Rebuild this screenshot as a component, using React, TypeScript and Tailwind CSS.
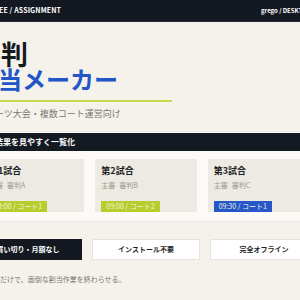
import React from "react";

const F = { fontFamily: '"Noto Sans CJK JP", "Noto Sans", sans-serif' };

function Card({ title, sub, time, color }: { title: string; sub: string; time: string; color: string }) {
  return (
    <div className="flex-1 bg-[#edeae3] h-[53px] px-[6px] pt-[6px]">
      <div className="text-[9px] leading-[12px] font-bold text-[#1c1f24]">{title}</div>
      <div className="flex gap-[4px] text-[7px] leading-[10px] text-[#9b988f] mt-[3px]">
        <span>主審</span>
        <span>{sub}</span>
      </div>
      <div className={`inline-block mt-[4px] h-[11px] px-[5px] text-[7px] leading-[11px] text-[#f3f6dc] ${color}`}>{time}</div>
    </div>
  );
}

export default function App() {
  return (
    <div className="w-[300px] h-[300px] overflow-hidden bg-[#f5f2eb]" style={F}>
      <div className="h-[22px] bg-[#131821] border-b border-[#2a303a]">
        <div className="-ml-[26px] w-[344px] h-full flex items-center pl-[2px]">
          <div className="text-[7px] font-bold text-white tracking-[0.02em] whitespace-nowrap">REFEREE / ASSIGNMENT</div>
          <div className="flex-1"></div>
          <div className="w-[57px] shrink-0 text-[6px] font-bold text-white whitespace-nowrap">grego / DESKTOP</div>
        </div>
      </div>
      <div className="-ml-[26px] w-[344px]">
        <div className="pt-[18px]">
          <div className="text-[27px] leading-[27px] font-bold text-[#16191e]">審判</div>
          <div className="text-[24px] leading-[24px] font-bold text-[#2256c6]">割当メーカー</div>
          <div className="w-[198px] h-[2px] bg-[#c6da4c] mt-[9px]"></div>
          <div className="text-[9px] leading-[12px] text-[#7b7872] mt-[6px] pl-[3px]">スポーツ大会・複数コート運営向け</div>
        </div>
        <div className="mt-[11px] bg-[#fbfaf7] border border-[#ebe8e1] pb-[9px]">
          <div className="h-[18px] bg-[#141a22] mt-[1px] flex items-center pl-[4px]">
            <span className="text-[8px] font-bold text-white">試合結果を見やすく一覧化</span>
          </div>
          <div className="flex gap-[11px] px-[8px] mt-[8px]">
            <Card title="第1試合" sub="審判A" time="09:00 / コート1" color="bg-[#b7cd2e]" />
            <Card title="第2試合" sub="審判B" time="09:00 / コート2" color="bg-[#b7cd2e]" />
            <Card title="第3試合" sub="審判C" time="09:30 / コート1" color="bg-[#2557c8]" />
          </div>
        </div>
        <div className="flex gap-[10px] mt-[17px]">
          <div className="flex-1 h-[21px] bg-[#131821] border border-[#131821] flex items-center justify-center text-[7px] font-bold text-white">買い切り・月額なし</div>
          <div className="flex-1 h-[21px] bg-white border border-[#e6e3dc] flex items-center justify-center text-[7px] font-bold text-[#1c1f24]">インストール不要</div>
          <div className="flex-1 h-[21px] bg-white border border-[#e6e3dc] flex items-center justify-center text-[7px] font-bold text-[#1c1f24]">完全オフライン</div>
        </div>
        <div className="text-[7px] leading-[10px] text-[#7b7872] mt-[14px] pl-[12px]">押すだけで、面倒な割当作業を終わらせる。</div>
      </div>
    </div>
  );
}
